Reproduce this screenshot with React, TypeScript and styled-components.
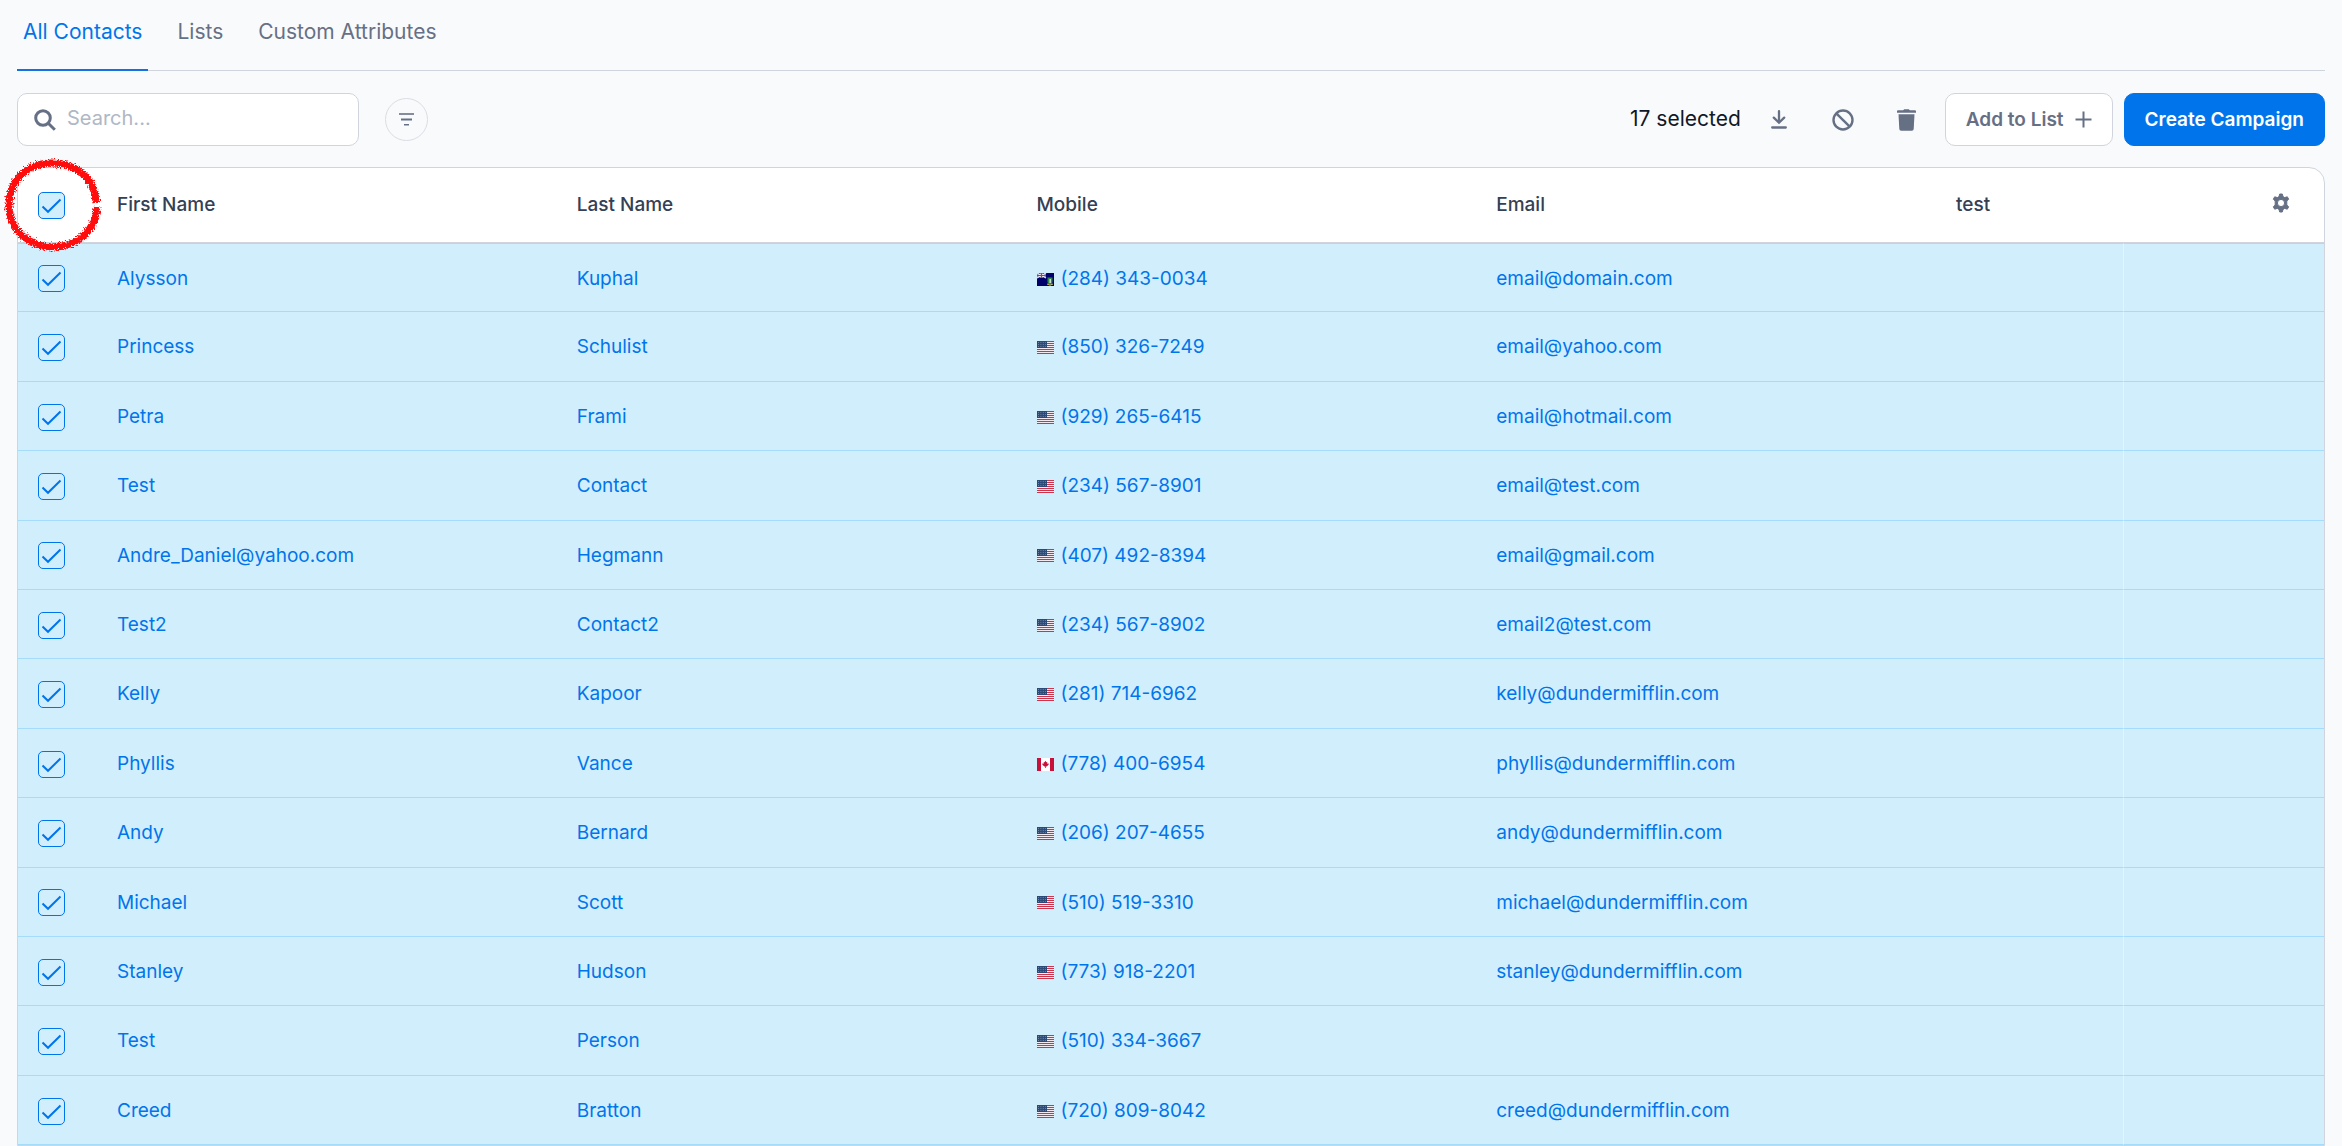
import React from "react";
import styled, { createGlobalStyle, css } from "styled-components";

const color = {
  page: "#f9fafc",
  line: "#d0d5dd",
  blue: "#0075eb",
  grey: "#667085",
  heading: "#344054",
  ink: "#101828",
  selected: "#d1eefd",
  rowLine: "#a5dbfb",
};

const GlobalStyle = createGlobalStyle`
  *, *::before, *::after { box-sizing: border-box; }
  html, body { margin: 0; background: ${color.page}; }
  body, button, input { font-family: "Inter", "Liberation Sans", sans-serif; }
  button, input { margin: 0; }
`;

const Page = styled.main`
  padding: 0 17px;
  height: 100vh;
  overflow: hidden;
`;

const Tabs = styled.nav`
  display: flex;
  gap: 23px;
  height: 71px;
  border-bottom: 1px solid ${color.line};
`;

const Tab = styled.a<{ $active?: boolean }>`
  height: 71px;
  padding: 18px 6px 0;
  font-size: 21px;
  line-height: 28px;
  text-decoration: none;
  white-space: nowrap;
  color: ${(p) => (p.$active ? color.blue : color.grey)};
  border-bottom: 2px solid ${(p) => (p.$active ? "#1570e0" : "transparent")};
`;

const Toolbar = styled.div`
  display: flex;
  align-items: center;
  padding: 22px 0 21px;
`;

const SearchBox = styled.label`
  display: flex;
  align-items: center;
  gap: 11px;
  width: 342px;
  height: 53px;
  padding: 0 16px;
  background: #fff;
  border: 1px solid ${color.line};
  border-radius: 10px;
`;

const SearchInput = styled.input`
  flex: 1;
  min-width: 0;
  padding: 0 0 3px;
  border: 0;
  outline: 0;
  background: none;
  font-size: 20px;
  line-height: 28px;
  color: ${color.ink};
  &::placeholder { color: #b0b7c5; opacity: 1; }
`;

const bareButton = css`
  display: flex;
  align-items: center;
  justify-content: center;
  padding: 0;
  border: 0;
  background: none;
  color: ${color.grey};
  cursor: pointer;
`;

const FilterButton = styled.button`
  ${bareButton}
  width: 43px;
  height: 43px;
  margin-left: 26px;
  border: 1px solid #dadde4;
  border-radius: 50%;
`;

const Actions = styled.div`
  display: flex;
  align-items: center;
  margin-left: auto;
`;

const SelectedCount = styled.span`
  padding-bottom: 2px;
  font-size: 21px;
  line-height: 28px;
  color: ${color.ink};
  white-space: nowrap;
`;

const IconGroup = styled.div`
  display: flex;
  margin: 0 6px;
`;

const IconButton = styled.button`
  ${bareButton}
  width: 64px;
  height: 44px;
`;

const Button = styled.button<{ $primary?: boolean }>`
  display: flex;
  align-items: center;
  justify-content: center;
  gap: 11px;
  height: 53px;
  padding: 0 20px;
  border-radius: 10px;
  border: 1px solid ${(p) => (p.$primary ? color.blue : color.line)};
  background: ${(p) => (p.$primary ? color.blue : "#fff")};
  color: ${(p) => (p.$primary ? "#fff" : color.grey)};
  font-size: 19px;
  font-weight: 600;
  line-height: 24px;
  white-space: nowrap;
  cursor: pointer;
  & + & { margin-left: 11px; }
`;

const Card = styled.section`
  position: relative;
  background: #fff;
  border: 1px solid ${color.line};
  border-radius: 16px 16px 0 0;
`;

const Table = styled.table`
  width: 100%;
  table-layout: fixed;
  border-collapse: separate;
  border-spacing: 0;
`;

const Col = styled.col<{ $width?: number }>`
  width: ${(p) => (p.$width ? `${p.$width}px` : "auto")};
`;

const HeadCell = styled.th`
  height: 75px;
  padding: 0 21px;
  border-bottom: 1px solid ${color.line};
  text-align: left;
  font-size: 19px;
  font-weight: 500;
  line-height: 24px;
  color: ${color.heading};
`;

const SettingsButton = styled.button`
  ${bareButton}
  margin: 0 13px 4px auto;
`;

const Row = styled.tr`
  background: ${color.selected};
`;

const Cell = styled.td`
  padding: 22px 21px 20px;
  border-bottom: 1px solid ${color.rowLine};
  font-size: 19px;
  line-height: 1.39;
  color: ${color.blue};
  white-space: nowrap;
  &:last-child { border-left: 1px solid #e2f4fe; }
  tr:first-child > & { border-top: 1px solid ${color.rowLine}; }
  tr:first-child > &:not(:first-child) { padding-bottom: 19px; }
`;

const CheckCell = styled(Cell)`
  padding: 2px 20px 0;
`;

const CheckHeadCell = styled(HeadCell)`
  padding: 0 20px;
`;

const Phone = styled.span`
  display: flex;
  align-items: center;
  gap: 7px;
`;

const CheckWrap = styled.span`
  position: relative;
  display: block;
  width: 27px;
  height: 27px;
`;

const CheckInput = styled.input`
  appearance: none;
  display: block;
  width: 27px;
  height: 27px;
  border: 1px solid ${color.blue};
  border-radius: 5px;
  background: ${color.selected};
`;

const Tick = styled.svg`
  position: absolute;
  inset: 0;
  pointer-events: none;
  display: none;
  input:checked + & { display: block; }
`;

const Scribble = styled.svg`
  position: absolute;
  left: -18px;
  top: -15px;
  pointer-events: none;
`;

function Checkbox({ label }: { label: string }) {
  return (
    <CheckWrap>
      <CheckInput type="checkbox" defaultChecked aria-label={label} />
      <Tick width="27" height="27" viewBox="0 0 27 27" fill="none" stroke={color.blue} strokeWidth="2">
        <path d="M4.5 14.5l5.5 5.3L22.5 7.5" />
      </Tick>
    </CheckWrap>
  );
}

type Country = "us" | "ca" | "vg";

const flagName: Record<Country, string> = {
  us: "United States",
  ca: "Canada",
  vg: "British Virgin Islands",
};

function Flag({ country }: { country: Country }) {
  return (
    <svg width="17" height="13" viewBox="0 0 17 13" role="img" aria-label={flagName[country]}>
      {country === "us" && (
        <>
          <rect width="17" height="13" fill="#f3e9ef" />
          {[0, 2, 4, 6, 8, 10, 12].map((y) => (
            <rect key={y} y={y} width="17" height="1" fill="#c9354c" />
          ))}
          <rect width="10" height="7" fill="#2c4a77" />
          <path d="M1 1.5h8M1 3.5h8M1 5.5h8" stroke="#6d84a5" strokeWidth="1" strokeDasharray="1 1.4" />
        </>
      )}
      {country === "ca" && (
        <>
          <rect width="17" height="13" fill="#fff" />
          <path d="M0 0h4v13H0zM13 0h4v13h-4z" fill="#c8103a" />
          <path d="M8.5 2.8l.9 1.5.9-.4-.2 1.9 1.5-.6-.2 1 .5.4-2.3 2h-.8l.1 1.4h-.8l.1-1.4h-.8L5.1 6.6l.5-.4-.2-1 1.5.6-.2-1.9.9.4z" fill="#c8103a" />
        </>
      )}
      {country === "vg" && (
        <>
          <rect width="17" height="13" fill="#00006b" />
          <path d="M0 0l9 5M9 0L0 5" stroke="#e7e3f2" strokeWidth="1.4" />
          <path d="M4.5 0v5M0 2.5h9" stroke="#fff" strokeWidth="2" />
          <path d="M4.5 0v5M0 2.5h9" stroke="#d9283f" strokeWidth="1.2" />
          <path d="M10.5 4.5h5v4.5q0 2-2.5 3-2.500-1-2.500-3z" fill="#2f8a4a" />
          <path d="M12.5 6h1.4v4h-1.4z" fill="#e8e6dc" />
          <path d="M10 11q3 2.4 6 0" stroke="#d9c25a" strokeWidth="1" fill="none" />
        </>
      )}
    </svg>
  );
}

const columns = ["First Name", "Last Name", "Mobile", "Email", "test"];

const contacts: [string, string, Country, string, string][] = [
  ["Alysson", "Kuphal", "vg", "(284) 343-0034", "email@domain.com"],
  ["Princess", "Schulist", "us", "(850) 326-7249", "email@yahoo.com"],
  ["Petra", "Frami", "us", "(929) 265-6415", "email@hotmail.com"],
  ["Test", "Contact", "us", "(234) 567-8901", "email@test.com"],
  ["Andre_Daniel@yahoo.com", "Hegmann", "us", "(407) 492-8394", "email@gmail.com"],
  ["Test2", "Contact2", "us", "(234) 567-8902", "email2@test.com"],
  ["Kelly", "Kapoor", "us", "(281) 714-6962", "kelly@dundermifflin.com"],
  ["Phyllis", "Vance", "ca", "(778) 400-6954", "phyllis@dundermifflin.com"],
  ["Andy", "Bernard", "us", "(206) 207-4655", "andy@dundermifflin.com"],
  ["Michael", "Scott", "us", "(510) 519-3310", "michael@dundermifflin.com"],
  ["Stanley", "Hudson", "us", "(773) 918-2201", "stanley@dundermifflin.com"],
  ["Test", "Person", "us", "(510) 334-3667", ""],
  ["Creed", "Bratton", "us", "(720) 809-8042", "creed@dundermifflin.com"],
];

export default function App() {
  return (
    <>
      <GlobalStyle />
      <Page>
        <Tabs>
          <Tab href="#all" $active>All Contacts</Tab>
          <Tab href="#lists">Lists</Tab>
          <Tab href="#attributes">Custom Attributes</Tab>
        </Tabs>

        <Toolbar>
          <SearchBox>
            <svg width="22" height="22" viewBox="0 0 22 22" fill="none" stroke={color.grey} strokeWidth="3">
              <circle cx="9" cy="9" r="7.3" />
              <path d="M14 14l6.8 6.8" />
            </svg>
            <SearchInput type="text" placeholder="Search..." aria-label="Search" />
          </SearchBox>
          <FilterButton type="button" aria-label="Filter">
            <svg width="15" height="13" viewBox="0 0 15 13" fill={color.grey}>
              <rect width="15" height="2" opacity="0.8" />
              <rect x="2" y="5.5" width="11" height="2" />
              <rect x="5" y="11" width="5" height="1.5" />
            </svg>
          </FilterButton>

          <Actions>
            <SelectedCount>17 selected</SelectedCount>
            <IconGroup>
              <IconButton type="button" aria-label="Download">
                <svg width="16" height="19" viewBox="0 0 16 19" fill="none" stroke={color.grey} strokeWidth="2.3" strokeLinecap="round">
                  <path d="M8 1.2v11M2.8 7.6L8 12.7l5.2-5.1" />
                  <path d="M1.2 17.5h13.6" />
                </svg>
              </IconButton>
              <IconButton type="button" aria-label="Block">
                <svg width="22" height="22" viewBox="0 0 22 22" fill="none" stroke={color.grey} strokeWidth="2.4">
                  <circle cx="11" cy="11" r="9.5" />
                  <path d="M4.3 4.3l13.4 13.4" />
                </svg>
              </IconButton>
              <IconButton type="button" aria-label="Delete">
                <svg width="19" height="22" viewBox="0 0 19 22" fill={color.grey}>
                  <path d="M1 1.3h5.2L7.2.3h4.6l1 1H18q1 0 1 1v1.5H0V2.3q0-1 1-1z" />
                  <path d="M1.5 5.2h16L16.700 20q-.1 1.700-1.800 1.700H4.100Q2.400 21.700 2.300 20z" />
                </svg>
              </IconButton>
            </IconGroup>
            <Button type="button">
              Add to List
              <svg width="17" height="17" viewBox="0 0 17 17" fill="none" stroke={color.grey} strokeWidth="2">
                <path d="M8.5 0.5v16M0.5 8.5h16" />
              </svg>
            </Button>
            <Button type="button" $primary>Create Campaign</Button>
          </Actions>
        </Toolbar>

        <Card>
          <Table>
            <colgroup>
              <Col $width={78} />
              <Col />
              <Col />
              <Col />
              <Col />
              <Col $width={188} />
              <Col $width={201} />
            </colgroup>
            <thead>
              <tr>
                <CheckHeadCell scope="col"><Checkbox label="Select all contacts" /></CheckHeadCell>
                {columns.map((name) => (
                  <HeadCell key={name} scope="col">{name}</HeadCell>
                ))}
                <HeadCell scope="col">
                  <SettingsButton type="button" aria-label="Table settings">
                    <svg width="18" height="20" viewBox="0 0 18 20" fill={color.grey} stroke={color.grey} strokeWidth="1" strokeLinejoin="round">
                      <path
                        fillRule="evenodd"
                        d="M7.7 1h2.6l.7 2.6 1.700 1 2.600-.8 1.400 2.400-1.900 1.800v4l1.900 1.800-1.400 2.400-2.600-.8-1.700 1-.7 2.600H7.700L7 16.400l-1.700-1-2.600.8-1.400-2.400L3.200 12V8L1.300 6.200l1.400-2.400 2.600.8 1.700-1zM9 6.400a3.600 3.600 0 1 0 0 7.200 3.600 3.600 0 0 0 0-7.200z"
                      />
                    </svg>
                  </SettingsButton>
                </HeadCell>
              </tr>
            </thead>
            <tbody>
              {contacts.map(([first, last, country, phone, email]) => (
                <Row key={phone}>
                  <CheckCell><Checkbox label={`Select ${first} ${last}`} /></CheckCell>
                  <Cell>{first}</Cell>
                  <Cell>{last}</Cell>
                  <Cell><Phone><Flag country={country} />{phone}</Phone></Cell>
                  <Cell>{email}</Cell>
                  <Cell />
                  <Cell />
                </Row>
              ))}
            </tbody>
          </Table>
          <Scribble width="106" height="104" viewBox="0 0 106 104" fill="none" aria-hidden="true">
            <defs>
              <filter id="crayon" x="-10%" y="-10%" width="120%" height="120%">
                <feTurbulence type="fractalNoise" baseFrequency="0.7" numOctaves="3" seed="4" result="grain" />
                <feDisplacementMap in="SourceGraphic" in2="grain" scale="7" xChannelSelector="R" yChannelSelector="G" />
              </filter>
            </defs>
            <g filter="url(#crayon)">
              <path d="M96 50C95 25 76 10 52 10C27 10 9 28 9 52C9 77 29 94 53 94C77 94 96 77 97 54" stroke="#ff0a0f" strokeWidth="7" />
            </g>
          </Scribble>
        </Card>
      </Page>
    </>
  );
}
